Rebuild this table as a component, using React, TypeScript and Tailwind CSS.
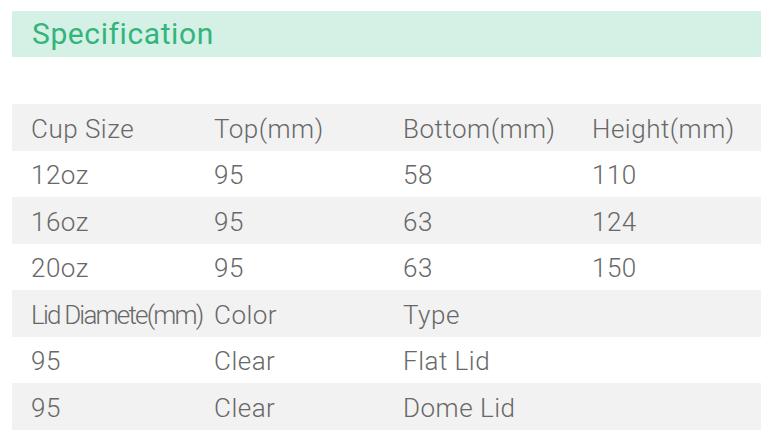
const rows: { cells: string[]; shaded: boolean; h: string }[] = [
  { cells: ["Cup Size", "Top(mm)", "Bottom(mm)", "Height(mm)"], shaded: true, h: "h-[47px]" },
  { cells: ["12oz", "95", "58", "110"], shaded: false, h: "h-[46px]" },
  { cells: ["16oz", "95", "63", "124"], shaded: true, h: "h-[47px]" },
  { cells: ["20oz", "95", "63", "150"], shaded: false, h: "h-[46px]" },
  { cells: ["Lid Diamete(mm)", "Color", "Type", ""], shaded: true, h: "h-[47px]" },
  { cells: ["95", "Clear", "Flat Lid", ""], shaded: false, h: "h-[46px]" },
  { cells: ["95", "Clear", "Dome Lid", ""], shaded: true, h: "h-[47px]" },
];

function Cell({ text }: { text: string }) {
  const narrow = text === "Lid Diamete(mm)";
  return (
    <div
      className={
        narrow
          ? "whitespace-nowrap text-[26px] leading-none pt-[2px] font-light tracking-[-1.8px]"
          : "whitespace-nowrap text-[26px] leading-none pt-[2px] font-light tracking-[0.5px]"
      }
    >
      {text}
    </div>
  );
}

export default function App() {
  return (
    <div className="w-[773px] h-[443px] bg-white pt-[11px] px-[12px] text-[#686868] font-['Roboto',sans-serif]">
      <div className="h-[46px] bg-[#d5f1e6] flex items-center pl-[20px]">
        <h2 className="text-[30px] leading-none tracking-[0.6px] text-[#33b47c] font-['Roboto',sans-serif] font-normal">
          Specification
        </h2>
      </div>
      <div className="mt-[47px] flex flex-col">
        {rows.map((r, i) => (
          <div
            key={i}
            className={`${r.h} grid grid-cols-[183px_189px_189px_1fr] items-center pl-[19px] ${r.shaded ? "bg-[#f2f2f2]" : "bg-white"}`}
          >
            {r.cells.map((c, j) => (
              <Cell key={j} text={c} />
            ))}
          </div>
        ))}
      </div>
    </div>
  );
}
